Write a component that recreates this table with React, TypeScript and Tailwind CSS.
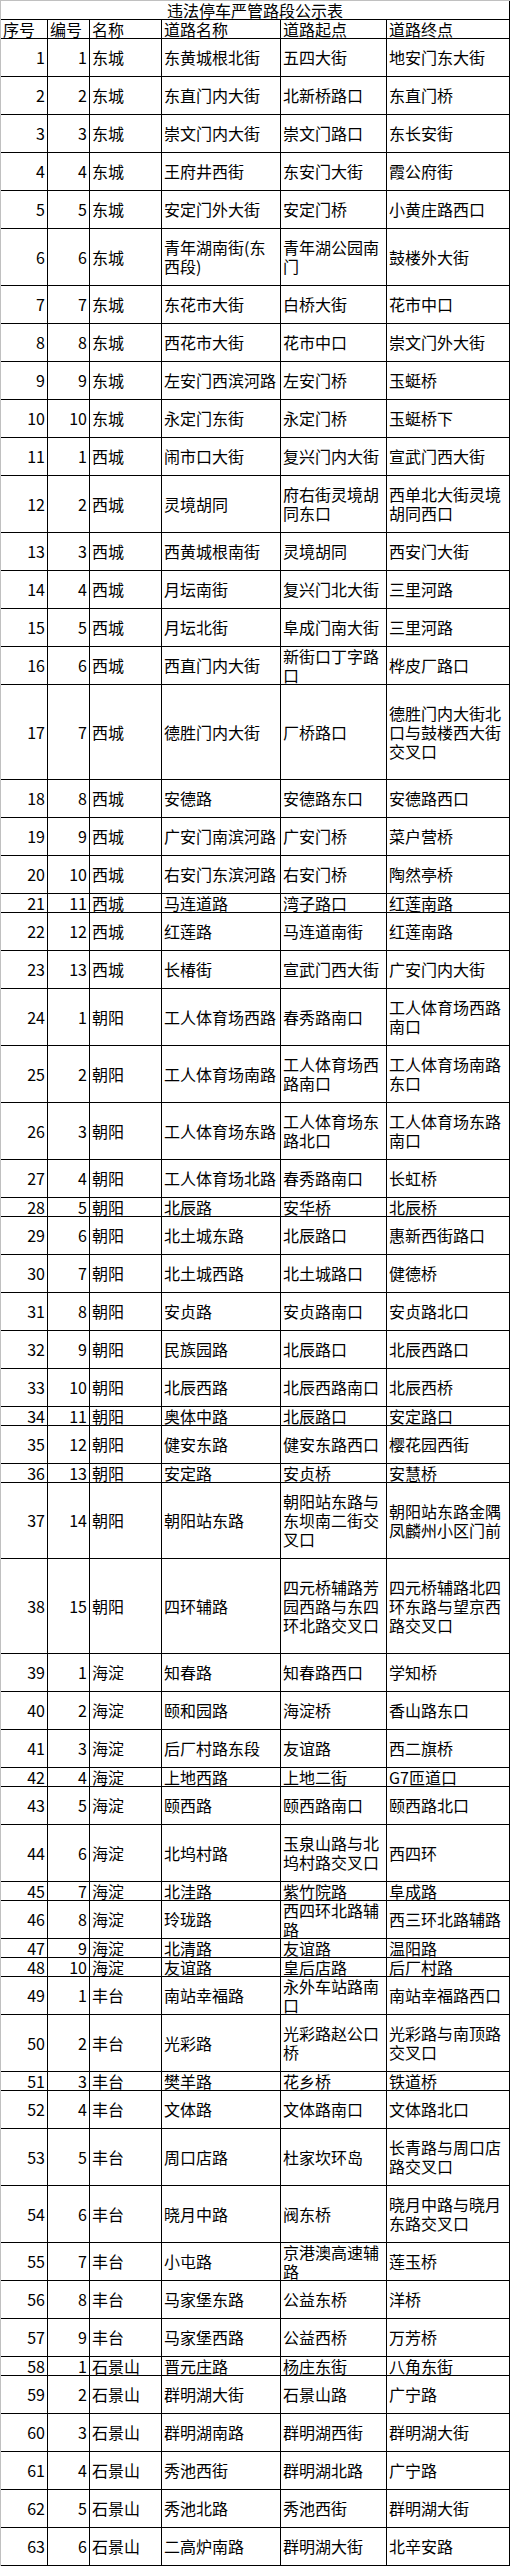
import React from "react";

type Row = [number, number, string, string, string, string, number];

const rows: Row[] = [
  [1, 1, "东城", "东黄城根北街", "五四大街", "地安门东大街", 2],
  [2, 2, "东城", "东直门内大街", "北新桥路口", "东直门桥", 2],
  [3, 3, "东城", "崇文门内大街", "崇文门路口", "东长安街", 2],
  [4, 4, "东城", "王府井西街", "东安门大街", "霞公府街", 2],
  [5, 5, "东城", "安定门外大街", "安定门桥", "小黄庄路西口", 2],
  [6, 6, "东城", "青年湖南街(东\n西段)", "青年湖公园南\n门", "鼓楼外大街", 3],
  [7, 7, "东城", "东花市大街", "白桥大街", "花市中口", 2],
  [8, 8, "东城", "西花市大街", "花市中口", "崇文门外大街", 2],
  [9, 9, "东城", "左安门西滨河路", "左安门桥", "玉蜓桥", 2],
  [10, 10, "东城", "永定门东街", "永定门桥", "玉蜓桥下", 2],
  [11, 1, "西城", "闹市口大街", "复兴门内大街", "宣武门西大街", 2],
  [12, 2, "西城", "灵境胡同", "府右街灵境胡\n同东口", "西单北大街灵境\n胡同西口", 3],
  [13, 3, "西城", "西黄城根南街", "灵境胡同", "西安门大街", 2],
  [14, 4, "西城", "月坛南街", "复兴门北大街", "三里河路", 2],
  [15, 5, "西城", "月坛北街", "阜成门南大街", "三里河路", 2],
  [16, 6, "西城", "西直门内大街", "新街口丁字路\n口", "桦皮厂路口", 2],
  [17, 7, "西城", "德胜门内大街", "厂桥路口", "德胜门内大街北\n口与鼓楼西大街\n交叉口", 5],
  [18, 8, "西城", "安德路", "安德路东口", "安德路西口", 2],
  [19, 9, "西城", "广安门南滨河路", "广安门桥", "菜户营桥", 2],
  [20, 10, "西城", "右安门东滨河路", "右安门桥", "陶然亭桥", 2],
  [21, 11, "西城", "马连道路", "湾子路口", "红莲南路", 1],
  [22, 12, "西城", "红莲路", "马连道南街", "红莲南路", 2],
  [23, 13, "西城", "长椿街", "宣武门西大街", "广安门内大街", 2],
  [24, 1, "朝阳", "工人体育场西路", "春秀路南口", "工人体育场西路\n南口", 3],
  [25, 2, "朝阳", "工人体育场南路", "工人体育场西\n路南口", "工人体育场南路\n东口", 3],
  [26, 3, "朝阳", "工人体育场东路", "工人体育场东\n路北口", "工人体育场东路\n南口", 3],
  [27, 4, "朝阳", "工人体育场北路", "春秀路南口", "长虹桥", 2],
  [28, 5, "朝阳", "北辰路", "安华桥", "北辰桥", 1],
  [29, 6, "朝阳", "北土城东路", "北辰路口", "惠新西街路口", 2],
  [30, 7, "朝阳", "北土城西路", "北土城路口", "健德桥", 2],
  [31, 8, "朝阳", "安贞路", "安贞路南口", "安贞路北口", 2],
  [32, 9, "朝阳", "民族园路", "北辰路口", "北辰西路口", 2],
  [33, 10, "朝阳", "北辰西路", "北辰西路南口", "北辰西桥", 2],
  [34, 11, "朝阳", "奥体中路", "北辰路口", "安定路口", 1],
  [35, 12, "朝阳", "健安东路", "健安东路西口", "樱花园西街", 2],
  [36, 13, "朝阳", "安定路", "安贞桥", "安慧桥", 1],
  [37, 14, "朝阳", "朝阳站东路", "朝阳站东路与\n东坝南二街交\n叉口", "朝阳站东路金隅\n凤麟州小区门前", 4],
  [38, 15, "朝阳", "四环辅路", "四元桥辅路芳\n园西路与东四\n环北路交叉口", "四元桥辅路北四\n环东路与望京西\n路交叉口", 5],
  [39, 1, "海淀", "知春路", "知春路西口", "学知桥", 2],
  [40, 2, "海淀", "颐和园路", "海淀桥", "香山路东口", 2],
  [41, 3, "海淀", "后厂村路东段", "友谊路", "西二旗桥", 2],
  [42, 4, "海淀", "上地西路", "上地二街", "G7匝道口", 1],
  [43, 5, "海淀", "颐西路", "颐西路南口", "颐西路北口", 2],
  [44, 6, "海淀", "北坞村路", "玉泉山路与北\n坞村路交叉口", "西四环", 3],
  [45, 7, "海淀", "北洼路", "紫竹院路", "阜成路", 1],
  [46, 8, "海淀", "玲珑路", "西四环北路辅\n路", "西三环北路辅路", 2],
  [47, 9, "海淀", "北清路", "友谊路", "温阳路", 1],
  [48, 10, "海淀", "友谊路", "皇后店路", "后厂村路", 1],
  [49, 1, "丰台", "南站幸福路", "永外车站路南\n口", "南站幸福路西口", 2],
  [50, 2, "丰台", "光彩路", "光彩路赵公口\n桥", "光彩路与南顶路\n交叉口", 3],
  [51, 3, "丰台", "樊羊路", "花乡桥", "铁道桥", 1],
  [52, 4, "丰台", "文体路", "文体路南口", "文体路北口", 2],
  [53, 5, "丰台", "周口店路", "杜家坎环岛", "长青路与周口店\n路交叉口", 3],
  [54, 6, "丰台", "晓月中路", "阀东桥", "晓月中路与晓月\n东路交叉口", 3],
  [55, 7, "丰台", "小屯路", "京港澳高速辅\n路", "莲玉桥", 2],
  [56, 8, "丰台", "马家堡东路", "公益东桥", "洋桥", 2],
  [57, 9, "丰台", "马家堡西路", "公益西桥", "万芳桥", 2],
  [58, 1, "石景山", "晋元庄路", "杨庄东街", "八角东街", 1],
  [59, 2, "石景山", "群明湖大街", "石景山路", "广宁路", 2],
  [60, 3, "石景山", "群明湖南路", "群明湖西街", "群明湖大街", 2],
  [61, 4, "石景山", "秀池西街", "群明湖北路", "广宁路", 2],
  [62, 5, "石景山", "秀池北路", "秀池西街", "群明湖大街", 2],
  [63, 6, "石景山", "二高炉南路", "群明湖大街", "北辛安路", 2],
];

const H: Record<number, string> = {
  1: "h-[19px]",
  2: "h-[38px]",
  3: "h-[57px]",
  4: "h-[76px]",
  5: "h-[95px]",
};

const numCell =
  "flex items-center justify-end pr-[2px] border-r border-b border-black";
const txtCell =
  "flex items-center pl-[2px] border-r border-b border-black whitespace-pre";

export default function App() {
  return (
    <div className="w-[510px] bg-white border-l border-t border-[#c0c0c0] font-['Noto_Sans_CJK_SC','Noto_Sans_CJK_JP',sans-serif] text-[16px] leading-[19px] text-black">
      <div className="h-[19px] border-r border-b border-black flex items-center justify-center">
        违法停车严管路段公示表
      </div>
      <div className="grid grid-cols-[47px_42px_72px_119px_106px_123px]">
        {["序号", "编号", "名称", "道路名称", "道路起点", "道路终点"].map((h) => (
          <div key={h} className={`${txtCell} h-[19px]`}>
            {h}
          </div>
        ))}
        {rows.map((r) => {
          const h = H[r[6]];
          return (
            <React.Fragment key={r[0]}>
              <div className={`${numCell} ${h}`}>{r[0]}</div>
              <div className={`${numCell} ${h}`}>{r[1]}</div>
              <div className={`${txtCell} ${h}`}>{r[2]}</div>
              <div className={`${txtCell} ${h}`}>{r[3]}</div>
              <div className={`${txtCell} ${h}`}>{r[4]}</div>
              <div className={`${txtCell} ${h}`}>{r[5]}</div>
            </React.Fragment>
          );
        })}
      </div>
    </div>
  );
}
